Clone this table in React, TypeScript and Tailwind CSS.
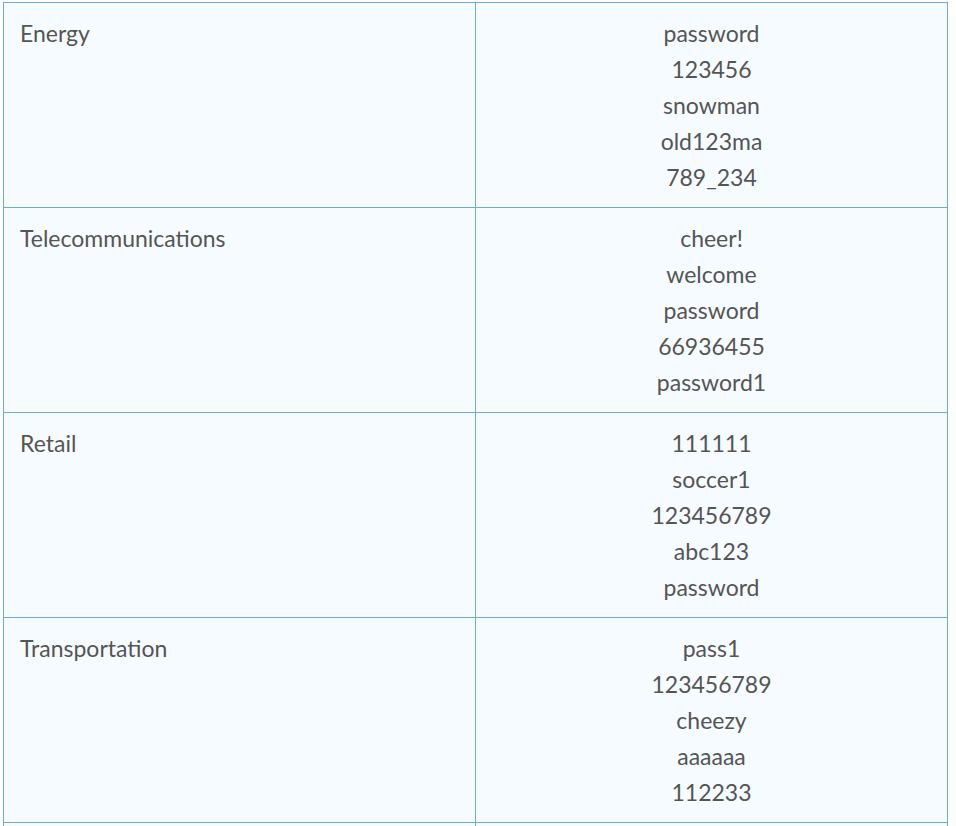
const rows: { name: string; pw: string[] }[] = [
  { name: "Energy", pw: ["password", "123456", "snowman", "old123ma", "789_234"] },
  { name: "Telecommunications", pw: ["cheer!", "welcome", "password", "66936455", "password1"] },
  { name: "Retail", pw: ["111111", "soccer1", "123456789", "abc123", "password"] },
  { name: "Transportation", pw: ["pass1", "123456789", "cheezy", "aaaaaa", "112233"] },
];

export default function App() {
  return (
    <div className="h-screen overflow-hidden bg-white pl-[3px] pt-[2px] pr-[8px]">
      <table
        className="w-[945px] border-collapse bg-[#f6fbff] text-[23px] leading-[36px] text-[#555]"
        style={{ fontFamily: "Lato, 'Noto Sans', sans-serif" }}
      >
        <tbody>
          {rows.map((r) => (
            <tr key={r.name}>
              <td className="w-1/2 border border-[#6aaae0] px-4 py-3 align-top text-left">{r.name}</td>
              <td className="w-1/2 border border-[#6aaae0] px-4 py-3 align-top text-center">
                {r.pw.map((p, i) => (
                  <div key={i}>{p}</div>
                ))}
              </td>
            </tr>
          ))}
          <tr>
            <td className="h-[60px] border border-[#6aaae0]" />
            <td className="h-[60px] border border-[#6aaae0]" />
          </tr>
        </tbody>
      </table>
    </div>
  );
}
